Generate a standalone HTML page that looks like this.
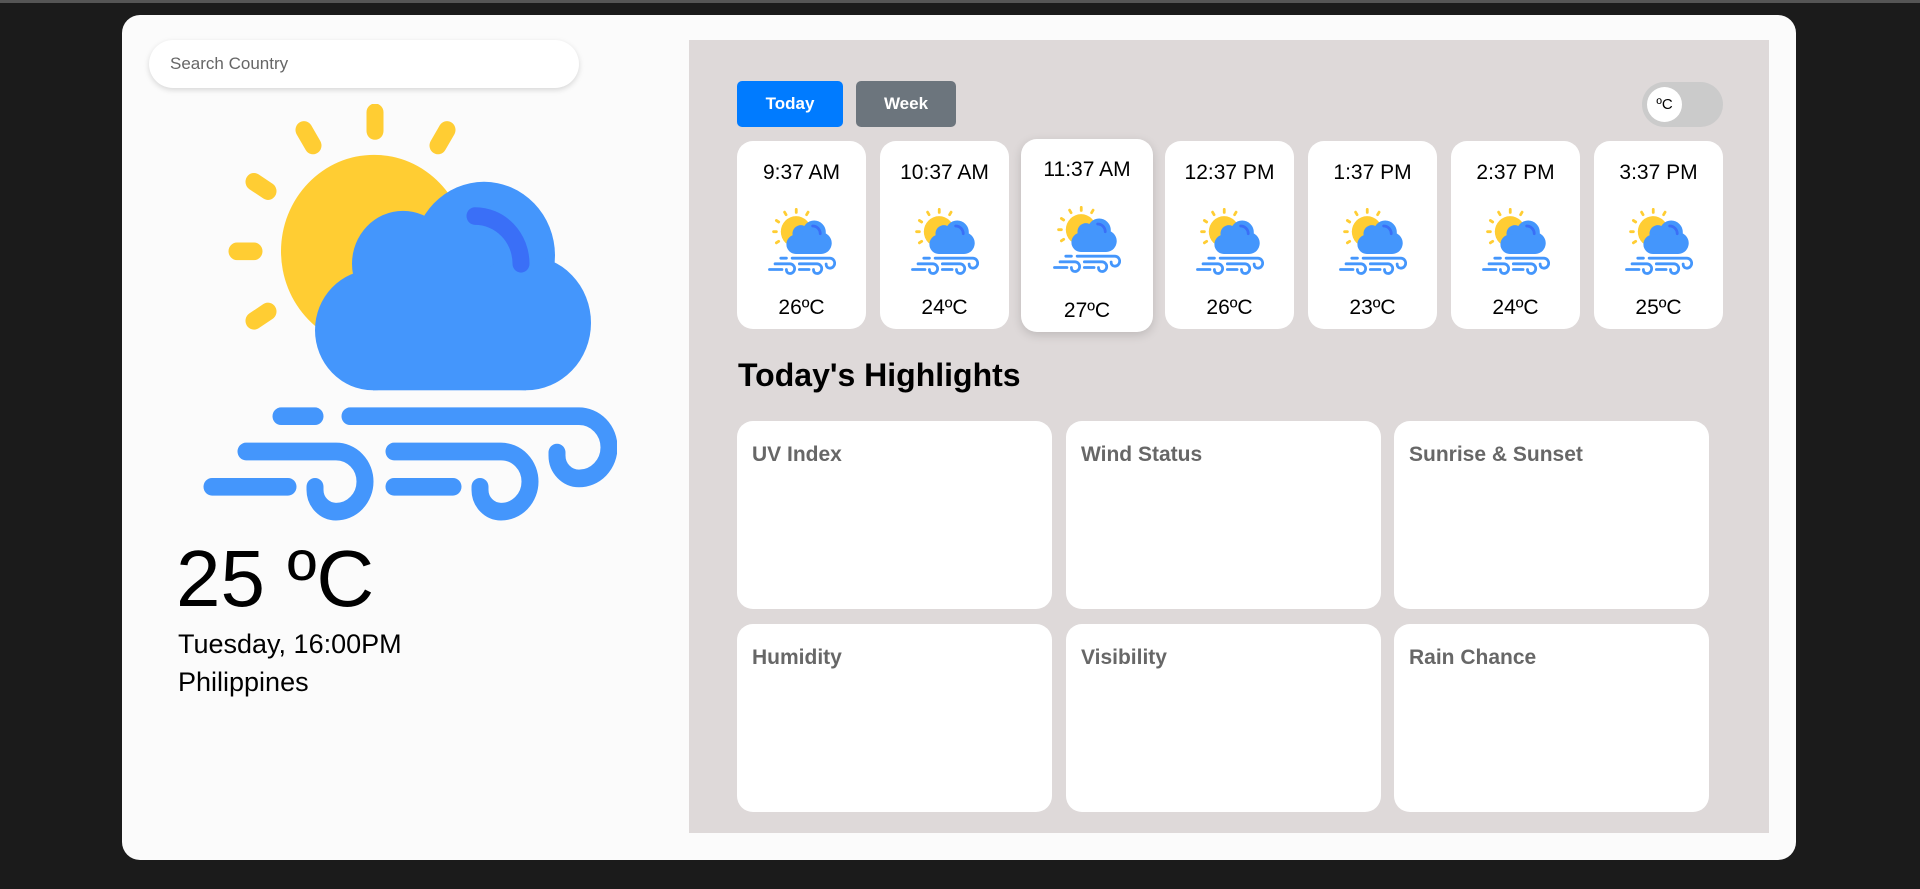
<!DOCTYPE html>
<html><head><meta charset="utf-8"><style>
*{box-sizing:border-box;margin:0;padding:0}
body{width:1920px;height:889px;background:#1b1b1b;font-family:"Liberation Sans",Arial,sans-serif;position:relative;overflow:hidden}
.topline{position:absolute;left:0;top:0;width:1920px;height:3px;background:#555}
.wrap{position:absolute;left:122px;top:15px;width:1674px;height:845px;background:#fbfbfb;border-radius:18px}
.abs{position:absolute}
.search{left:149px;top:40px;width:430px;height:48px;background:#fff;border-radius:24px;box-shadow:0 2px 6px rgba(0,0,0,.15);font-size:17px;color:#666;padding:14px 0 0 21px}
.panel{left:689px;top:40px;width:1080px;height:793px;background:#ded9d9}
.btn{top:81px;height:46px;border-radius:5px;color:#fff;font-weight:bold;font-size:17px;text-align:center;line-height:46px}
.toggle{left:1642px;top:82px;width:81px;height:45px;border-radius:23px;background:#cbcbcb}
.knob{left:1647px;top:87px;width:35px;height:35px;border-radius:50%;background:#fff;font-size:15px;line-height:35px;text-align:center;color:#000}
.hc{top:141px;width:129px;height:188px;background:#fff;border-radius:16px;text-align:center;font-size:21px;color:#000}
.hc .t{position:absolute;left:0;right:0;top:20px}
.hc .d{position:absolute;left:0;right:0;top:155px}
.hc svg{position:absolute;left:31px;top:67px}
.hl{width:315px;height:188px;background:#fff;border-radius:16px;font-weight:bold;font-size:21px;color:#676767;padding:22px 0 0 15px}
</style></head><body>
<div class="topline"></div>
<svg width="0" height="0" style="position:absolute">
<defs><symbol id="ic" viewBox="203 99 414 402" preserveAspectRatio="none">
<g stroke="#ffcd33" stroke-width="17" stroke-linecap="round">
<line x1="375" y1="107" x2="375" y2="125"/><line x1="304" y1="124" x2="313" y2="139"/><line x1="447" y1="124" x2="438" y2="139"/>
<line x1="254" y1="174" x2="268" y2="183"/><line x1="237" y1="241" x2="254" y2="241"/><line x1="254" y1="308" x2="268" y2="299"/>
</g>
<circle cx="374" cy="241" r="93" fill="#ffcd33"/>
<g fill="#4496fc"><circle cx="403" cy="253" r="51"/><circle cx="484" cy="245" r="71"/><circle cx="526" cy="310" r="65"/><circle cx="373" cy="317" r="58"/><rect x="373" y="260" width="153" height="115"/></g>
<path d="M475 207 A46 46 0 0 1 521 253" fill="none" stroke="#3a6ff7" stroke-width="17" stroke-linecap="round"/>
<g fill="none" stroke="#4496fc" stroke-width="17" stroke-linecap="round">
<line x1="281" y1="400" x2="315" y2="400"/>
<path d="M350 400 H579 A30 30 0 0 1 579 460 A22 22 0 0 1 557 438 V435"/>
<path d="M246 434 H336 A29 29 0 0 1 336 492 A21 21 0 0 1 315 471 V468"/>
<path d="M394 434 H501 A29 29 0 0 1 501 492 A21 21 0 0 1 480 471 V468"/>
<line x1="212" y1="468" x2="288" y2="468"/><line x1="394" y1="468" x2="453" y2="468"/>
</g></symbol></defs></svg>
<div class="wrap"></div>
<div class="abs search">Search Country</div>
<svg class="abs" style="left:203px;top:104px" width="414" height="417"><use href="#ic"/></svg>
<div class="abs" style="left:176px;top:533px;font-size:80px;color:#000">25 ºC</div>
<div class="abs" style="left:178px;top:629px;font-size:27px;color:#000">Tuesday, 16:00PM</div>
<div class="abs" style="left:178px;top:667px;font-size:27px;color:#000">Philippines</div>
<div class="abs panel"></div>
<div class="abs btn" style="left:737px;width:106px;background:#007bff">Today</div>
<div class="abs btn" style="left:856px;width:100px;background:#6c757d">Week</div>
<div class="abs toggle"></div><div class="abs knob">ºC</div>
<div class="abs hc" style="left:737px"><div class="t">9:37 AM</div><svg width="68" height="67"><use href="#ic"/></svg><div class="d">26ºC</div></div>
<div class="abs hc" style="left:880px"><div class="t">10:37 AM</div><svg width="68" height="67"><use href="#ic"/></svg><div class="d">24ºC</div></div>
<div class="abs hc" style="left:1021px;top:139px;width:132px;height:193px;box-shadow:0 3px 10px rgba(0,0,0,.15)"><div class="t" style="top:19px">11:37 AM</div><svg width="68" height="67" style="left:32px;top:67px"><use href="#ic"/></svg><div class="d" style="top:160px">27ºC</div></div>
<div class="abs hc" style="left:1165px"><div class="t">12:37 PM</div><svg width="68" height="67"><use href="#ic"/></svg><div class="d">26ºC</div></div>
<div class="abs hc" style="left:1308px"><div class="t">1:37 PM</div><svg width="68" height="67"><use href="#ic"/></svg><div class="d">23ºC</div></div>
<div class="abs hc" style="left:1451px"><div class="t">2:37 PM</div><svg width="68" height="67"><use href="#ic"/></svg><div class="d">24ºC</div></div>
<div class="abs hc" style="left:1594px"><div class="t">3:37 PM</div><svg width="68" height="67"><use href="#ic"/></svg><div class="d">25ºC</div></div>
<div class="abs" style="left:738px;top:357px;font-size:32px;font-weight:bold;color:#000">Today's Highlights</div>
<div class="abs hl" style="left:737px;top:421px">UV Index</div>
<div class="abs hl" style="left:1066px;top:421px">Wind Status</div>
<div class="abs hl" style="left:1394px;top:421px">Sunrise &amp; Sunset</div>
<div class="abs hl" style="left:737px;top:624px">Humidity</div>
<div class="abs hl" style="left:1066px;top:624px">Visibility</div>
<div class="abs hl" style="left:1394px;top:624px">Rain Chance</div>
</body></html>
